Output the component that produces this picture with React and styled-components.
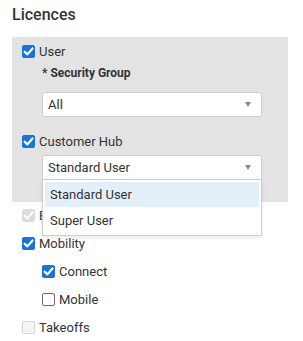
import React from 'react'
import styled, { createGlobalStyle } from 'styled-components'

const GlobalStyle = createGlobalStyle`
  body {
    margin: 0;
    background: #fff;
    font-family: Roboto, "Liberation Sans", sans-serif;
    color: #333;
  }
`

const Page = styled.div`
  padding: 0 15px 0 12px;
`

const Title = styled.h3`
  margin: 0;
  padding-top: 6px;
  height: 31px;
  font-size: 16px;
  font-weight: 500;
  line-height: 18px;
  color: #333;
`

const Panel = styled.div`
  background: #e3e3e3;
  padding: 0 10px 22px 10px;
`

const Row = styled.div`
  display: flex;
  align-items: center;
  height: 28px;
  padding-left: ${p => (p.indent ? '20px' : '0')};
  font-size: 13px;
`

const Box = styled.span`
  box-sizing: border-box;
  width: 13px;
  height: 13px;
  border-radius: 2px;
  margin-right: 4px;
  display: inline-flex;
  align-items: center;
  justify-content: center;
  flex-shrink: 0;
  background: ${p => (p.disabled ? (p.checked ? '#dcdcdc' : '#f4f4f4') : p.checked ? '#1a73d9' : '#fff')};
  border: 1px solid
    ${p => (p.disabled ? (p.checked ? '#dcdcdc' : '#d6d6d6') : p.checked ? '#1a73d9' : '#6d6d6d')};
`

const Label = styled.span`
  color: #333;
`

const Indent = styled.div`
  padding-left: 20px;
`

const FieldLabel = styled.div`
  font-size: 12px;
  font-weight: 700;
  line-height: 16px;
  margin-bottom: 11px;
  color: #333;
`

const SelectWrap = styled.div`
  position: relative;
  width: 220px;
`

const Select = styled.div`
  box-sizing: border-box;
  height: 25px;
  background: #fff;
  border: 1px solid #cfcfcf;
  border-radius: ${p => (p.open ? '3px 3px 0 0' : '3px')};
  display: flex;
  align-items: center;
  justify-content: space-between;
  padding: 0 10px 0 5px;
  font-size: 13px;
  color: #333;
`

const Arrow = styled.span`
  width: 0;
  height: 0;
  border-left: 3.5px solid transparent;
  border-right: 3.5px solid transparent;
  border-top: 5px solid #8a8a8a;
`

const Menu = styled.div`
  position: absolute;
  left: 0;
  top: 100%;
  width: 220px;
  box-sizing: border-box;
  background: #fff;
  border: 1px solid #cfcfcf;
  border-top: none;
  padding: 2px 2px 1px 2px;
  z-index: 5;
  box-shadow: 0 2px 4px rgba(0, 0, 0, 0.08);
`

const Item = styled.div`
  height: ${p => (p.active ? '25px' : '27px')};
  display: flex;
  align-items: center;
  padding-left: 5px;
  font-size: 13px;
  color: #333;
  background: ${p => (p.active ? '#e3effb' : 'transparent')};
`

const List = styled.div`
  margin-top: -1px;
  padding-left: 10px;
`

const Check = () => (
  <svg width="11" height="11" viewBox="0 0 10 10">
    <path d="M1.5 5.2 L4 7.6 L8.6 2.2" fill="none" stroke="#fff" strokeWidth="2" strokeLinecap="round" strokeLinejoin="round" />
  </svg>
)

const CheckRow = ({ checked, disabled, indent, children }) => (
  <Row indent={indent}>
    <Box checked={checked} disabled={disabled}>
      {checked && <Check />}
    </Box>
    <Label>{children}</Label>
  </Row>
)

export default function App() {
  return (
    <Page>
      <GlobalStyle />
      <Title>Licences</Title>
      <Panel>
        <CheckRow checked>User</CheckRow>
        <Indent>
          <FieldLabel>* Security Group</FieldLabel>
          <SelectWrap>
            <Select>
              All
              <Arrow />
            </Select>
          </SelectWrap>
        </Indent>
        <div style={{ height: 10 }} />
        <CheckRow checked>Customer Hub</CheckRow>
        <Indent>
          <SelectWrap>
            <Select open>
              Standard User
              <Arrow />
            </Select>
            <Menu>
              <Item active>Standard User</Item>
              <Item>Super User</Item>
            </Menu>
          </SelectWrap>
        </Indent>
      </Panel>
      <List>
        <CheckRow checked disabled>Estimating</CheckRow>
        <CheckRow checked>Mobility</CheckRow>
        <CheckRow checked indent>Connect</CheckRow>
        <CheckRow indent>Mobile</CheckRow>
        <CheckRow disabled>Takeoffs</CheckRow>
      </List>
    </Page>
  )
}
